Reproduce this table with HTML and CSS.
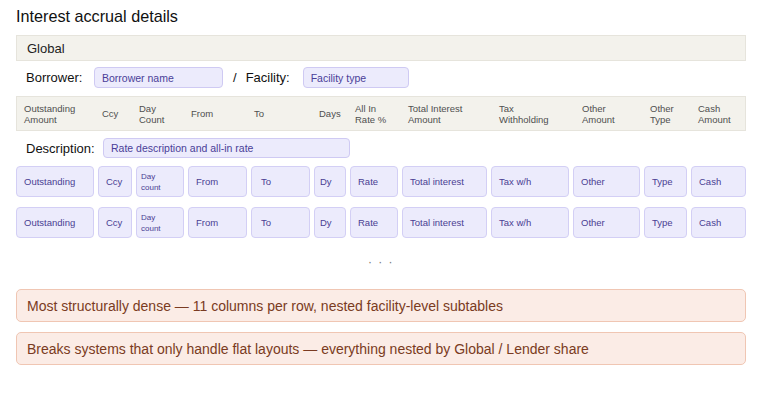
FILE: index.html
```html
<!DOCTYPE html>
<html>
<head>
<meta charset="utf-8">
<link rel="stylesheet" href="styles.css">
</head>
<body>
<div class="page">
  <h1 class="title">Interest accrual details</h1>
  <div class="section-bar">Global</div>
  <div class="party-row">
    <span class="label label-borrower">Borrower:</span>
    <span class="field field-borrower">Borrower name</span>
    <span class="slash">/</span>
    <span class="label label-facility">Facility:</span>
    <span class="field field-facility">Facility type</span>
  </div>
  <div class="col-header">
    <span>Outstanding<br>Amount</span>
    <span>Ccy</span>
    <span>Day<br>Count</span>
    <span>From</span>
    <span>To</span>
    <span>Days</span>
    <span>All In<br>Rate %</span>
    <span>Total Interest<br>Amount</span>
    <span>Tax<br>Withholding</span>
    <span>Other<br>Amount</span>
    <span>Other<br>Type</span>
    <span>Cash<br>Amount</span>
  </div>
  <div class="desc-row">
    <span class="label label-desc">Description:</span>
    <span class="field field-desc">Rate description and all-in rate</span>
  </div>
  <div class="data-row">
    <span class="cell">Outstanding</span>
    <span class="cell">Ccy</span>
    <span class="cell cell-small">Day<br>count</span>
    <span class="cell">From</span>
    <span class="cell cell-wide-pad">To</span>
    <span class="cell cell-narrow-pad">Dy</span>
    <span class="cell">Rate</span>
    <span class="cell">Total interest</span>
    <span class="cell">Tax w/h</span>
    <span class="cell">Other</span>
    <span class="cell">Type</span>
    <span class="cell">Cash</span>
  </div>
  <div class="data-row">
    <span class="cell">Outstanding</span>
    <span class="cell">Ccy</span>
    <span class="cell cell-small">Day<br>count</span>
    <span class="cell">From</span>
    <span class="cell cell-wide-pad">To</span>
    <span class="cell cell-narrow-pad">Dy</span>
    <span class="cell">Rate</span>
    <span class="cell">Total interest</span>
    <span class="cell">Tax w/h</span>
    <span class="cell">Other</span>
    <span class="cell">Type</span>
    <span class="cell">Cash</span>
  </div>
  <div class="more">· · ·</div>
  <div class="note">Most structurally dense — 11 columns per row, nested facility-level subtables</div>
  <div class="note">Breaks systems that only handle flat layouts — everything nested by Global / Lender share</div>
</div>
</body>
</html>
```

FILE: styles.css
```css
* { box-sizing: border-box; }
html, body { margin: 0; padding: 0; background: #ffffff; }
body {
  font-family: "Liberation Sans", Arial, Helvetica, sans-serif;
  color: #1a1a1a;
}
.page {
  width: 760px;
  padding: 6px 14px 0 16px;
}
.title {
  margin: 0 0 9px 0;
  font-size: 16.2px;
  line-height: 20px;
  font-weight: normal;
  color: #111;
}
.section-bar {
  height: 26px;
  display: flex;
  align-items: center;
  padding-left: 10px;
  font-size: 13px;
  color: #222;
  background: #f3f2ec;
  border: 1px solid #e6e4dc;
  margin-bottom: 6px;
}
.party-row, .desc-row {
  display: flex;
  align-items: center;
  height: 21px;
  margin-bottom: 8px;
}
.desc-row { height: 20px; margin-bottom: 8px; }
.label {
  font-size: 13px;
  color: #111;
  padding-left: 10px;
}
.label-borrower { width: 78px; }
.label-desc { width: 87px; }
.label-facility { padding-left: 9px; width: 66px; }
.slash { font-size: 13px; color: #111; margin-left: 10px; }
.field {
  display: flex;
  align-items: center;
  height: 100%;
  padding-left: 7px;
  font-size: 10.5px;
  color: #4a3e98;
  background: #ecebfc;
  border: 1px solid #cfcaf3;
  border-radius: 4px;
}
.field-borrower { width: 129px; }
.field-facility { width: 106px; }
.field-desc { width: 247px; }
.col-header {
  display: grid;
  grid-template-columns: 78px 37px 52px 63px 65px 36px 53px 91px 83px 68px 48px 1fr;
  align-items: center;
  height: 35px;
  padding-left: 7px;
  background: #f3f2ec;
  border: 1px solid #e6e4dc;
  font-size: 9.5px;
  line-height: 11px;
  color: #4f4f4f;
  margin-bottom: 7px;
}
.data-row {
  display: grid;
  grid-template-columns: 77.5px 33.5px 47.5px 58.5px 58.5px 31.5px 47.5px 84.5px 77.5px 66.5px 42.5px 54.5px;
  column-gap: 4.5px;
  height: 31px;
  margin-bottom: 10px;
}
.data-row + .data-row { margin-bottom: 0; }
.cell {
  display: flex;
  align-items: center;
  padding: 0 7px;
  font-size: 9.5px;
  line-height: 11px;
  color: #4a3e93;
  background: #ecebfc;
  border: 1px solid #d3cff5;
  border-radius: 4px;
  white-space: nowrap;
}
.cell-small { font-size: 8px; line-height: 11px; padding-left: 4px; }
.cell-wide-pad { padding-left: 9px; }
.cell-narrow-pad { padding-left: 5px; }
.more {
  margin-top: 18px;
  height: 12px;
  line-height: 12px;
  text-align: center;
  font-size: 12px;
  letter-spacing: 1.5px;
  color: #777;
}
.note {
  height: 33px;
  display: flex;
  align-items: center;
  padding-left: 10px;
  font-size: 14px;
  color: #7a3b22;
  background: #fbece6;
  border: 1px solid #f0c6b3;
  border-radius: 5px;
  margin-top: 10px;
}
.more + .note { margin-top: 21px; }
```
